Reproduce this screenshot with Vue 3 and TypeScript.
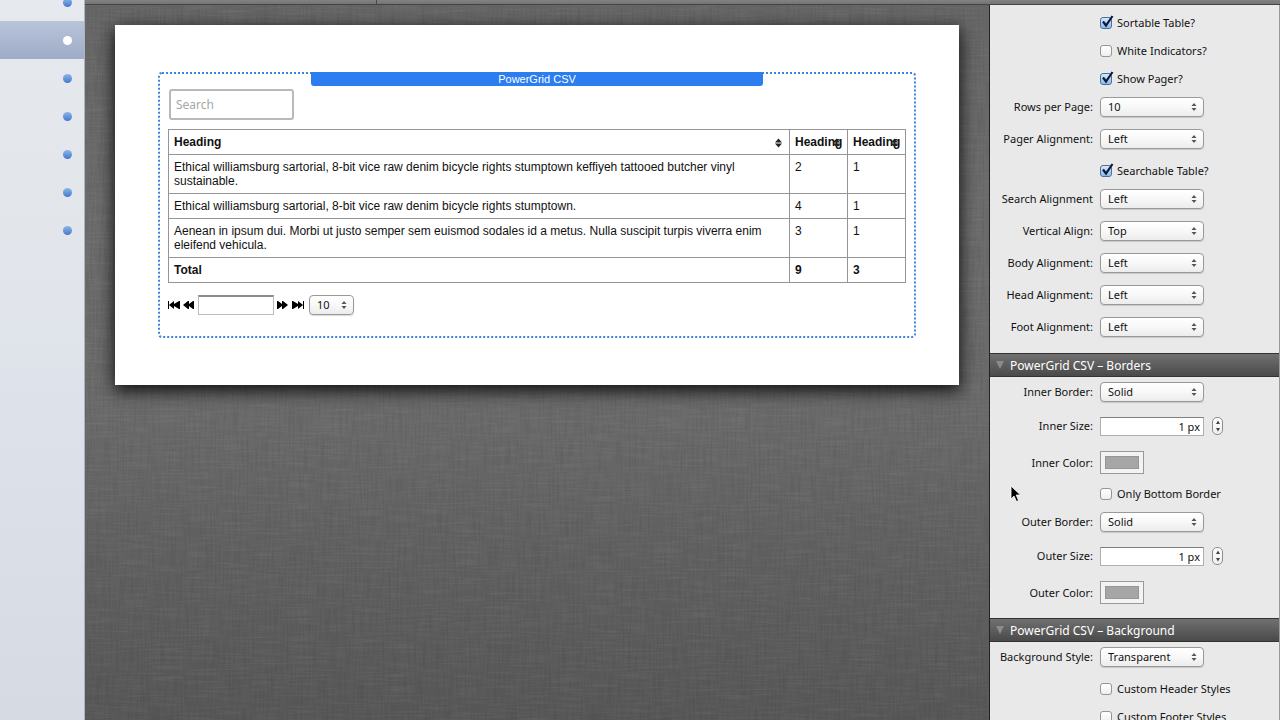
<script setup lang="ts">
import { ref } from 'vue'

interface CheckField { kind: 'check'; id: string; label: string; checked: boolean }
interface SelectField { kind: 'select'; id: string; label: string; value: string; options: string[] }
interface SizeField { kind: 'size'; id: string; label: string; value: string }
interface ColorField { kind: 'color'; id: string; label: string; value: string }
type Field = CheckField | SelectField | SizeField | ColorField
interface Group { id: string; title: string; fields: Field[] }

const align = ['Left', 'Center', 'Right']
const borders = ['None', 'Solid', 'Dashed', 'Dotted']

const groups = ref<Group[]>([
  {
    id: 'general',
    title: '',
    fields: [
      { kind: 'check', id: 'sortable', label: 'Sortable Table?', checked: true },
      { kind: 'check', id: 'white', label: 'White Indicators?', checked: false },
      { kind: 'check', id: 'pager', label: 'Show Pager?', checked: true },
      { kind: 'select', id: 'rows', label: 'Rows per Page:', value: '10', options: ['10', '20', '50'] },
      { kind: 'select', id: 'pager-align', label: 'Pager Alignment:', value: 'Left', options: align },
      { kind: 'check', id: 'searchable', label: 'Searchable Table?', checked: true },
      { kind: 'select', id: 'search-align', label: 'Search Alignment', value: 'Left', options: align },
      { kind: 'select', id: 'vertical', label: 'Vertical Align:', value: 'Top', options: ['Top', 'Middle', 'Bottom'] },
      { kind: 'select', id: 'body-align', label: 'Body Alignment:', value: 'Left', options: align },
      { kind: 'select', id: 'head-align', label: 'Head Alignment:', value: 'Left', options: align },
      { kind: 'select', id: 'foot-align', label: 'Foot Alignment:', value: 'Left', options: align }
    ]
  },
  {
    id: 'borders',
    title: 'PowerGrid CSV – Borders',
    fields: [
      { kind: 'select', id: 'inner-border', label: 'Inner Border:', value: 'Solid', options: borders },
      { kind: 'size', id: 'inner-size', label: 'Inner Size:', value: '1 px' },
      { kind: 'color', id: 'inner-color', label: 'Inner Color:', value: '#a6a6a6' },
      { kind: 'check', id: 'only-bottom', label: 'Only Bottom Border', checked: false },
      { kind: 'select', id: 'outer-border', label: 'Outer Border:', value: 'Solid', options: borders },
      { kind: 'size', id: 'outer-size', label: 'Outer Size:', value: '1 px' },
      { kind: 'color', id: 'outer-color', label: 'Outer Color:', value: '#a6a6a6' }
    ]
  },
  {
    id: 'background',
    title: 'PowerGrid CSV – Background',
    fields: [
      { kind: 'select', id: 'bg-style', label: 'Background Style:', value: 'Transparent', options: ['Transparent', 'Color'] },
      { kind: 'check', id: 'header-styles', label: 'Custom Header Styles', checked: false },
      { kind: 'check', id: 'footer-styles', label: 'Custom Footer Styles', checked: false }
    ]
  }
])

const pages = ref([0, 1, 2, 3, 4, 5, 6])
const activePage = ref(1)
const search = ref('')
const pageNumber = ref('')
const pageSize = ref('10')

const headings = ['Heading', 'Heading', 'Heading']
const rows: string[][] = [
  ['Ethical williamsburg sartorial, 8-bit vice raw denim bicycle rights stumptown keffiyeh tattooed butcher vinyl sustainable.', '2', '1'],
  ['Ethical williamsburg sartorial, 8-bit vice raw denim bicycle rights stumptown.', '4', '1'],
  ['Aenean in ipsum dui. Morbi ut justo semper sem euismod sodales id a metus. Nulla suscipit turpis viverra enim eleifend vehicula.', '3', '1']
]
const totals = ['Total', '9', '3']
</script>

<template>
  <div class="app">
    <nav class="sidebar" aria-label="Pages">
      <button
        v-for="p in pages"
        :key="p"
        type="button"
        class="page-row"
        :class="{ active: p === activePage }"
        :aria-label="`Page ${p + 1}`"
        @click="activePage = p"
      >
        <span class="dot"></span>
      </button>
    </nav>

    <div class="workspace">
      <div class="topbar"><span class="tab-edge"></span></div>
      <div class="body">
        <main class="canvas">
          <svg class="linen" width="100%" height="100%" aria-hidden="true">
            <filter id="weft" x="0" y="0" width="100%" height="100%">
              <feTurbulence type="fractalNoise" baseFrequency="0.03 0.5" numOctaves="2" seed="4" />
              <feColorMatrix values="0 0 0 0 1  0 0 0 0 1  0 0 0 0 1  1.2 0 0 0 -0.5" />
            </filter>
            <filter id="warp" x="0" y="0" width="100%" height="100%">
              <feTurbulence type="fractalNoise" baseFrequency="0.5 0.03" numOctaves="2" seed="9" />
              <feColorMatrix values="0 0 0 0 0  0 0 0 0 0  0 0 0 0 0  1.2 0 0 0 -0.5" />
            </filter>
            <rect width="100%" height="100%" filter="url(#weft)" opacity="0.1" />
            <rect width="100%" height="100%" filter="url(#warp)" opacity="0.13" />
          </svg>

          <div class="sheet">
            <section class="widget">
              <div class="widget-name">PowerGrid CSV</div>
              <input v-model="search" class="search" type="text" placeholder="Search" aria-label="Search" />
              <table>
                <colgroup>
                  <col />
                  <col class="narrow" />
                  <col class="narrow" />
                </colgroup>
                <thead>
                  <tr>
                    <th v-for="(h, i) in headings" :key="i" scope="col">
                      <button type="button" class="sort">
                        {{ h }}
                        <svg class="sort-icon" viewBox="0 0 7 10" width="7" height="10" aria-hidden="true">
                          <path d="M3.500 0.500 7 4.400H0zM0 5.600h7L3.500 9.500z" fill="#222" />
                        </svg>
                      </button>
                    </th>
                  </tr>
                </thead>
                <tbody>
                  <tr v-for="(r, i) in rows" :key="i">
                    <td v-for="(c, j) in r" :key="j">{{ c }}</td>
                  </tr>
                </tbody>
                <tfoot>
                  <tr>
                    <td v-for="(t, i) in totals" :key="i">{{ t }}</td>
                  </tr>
                </tfoot>
              </table>
              <div class="pager">
                <button type="button" aria-label="First page">
                  <svg viewBox="0 0 12 8" width="12" height="8"><path d="M0 0h1v8H0zM1 4l5-4v3l5-3h1v8h-1L6 5v3z" /></svg>
                </button>
                <button type="button" aria-label="Previous page">
                  <svg viewBox="0 0 12 8" width="12" height="8"><path d="M0 4l5-4h1v3l4-3h1v8h-1L6 5v3H5z" /></svg>
                </button>
                <input v-model="pageNumber" type="text" aria-label="Page number" />
                <button type="button" aria-label="Next page">
                  <svg viewBox="0 0 12 8" width="12" height="8"><path d="M11 4L6 0H5v3L1 0H0v8h1l4-3v3h1z" /></svg>
                </button>
                <button type="button" aria-label="Last page">
                  <svg viewBox="0 0 12 8" width="12" height="8"><path d="M12 0h-1v8h1zM11 4L6 0v3L1 0H0v8h1l5-3v3z" /></svg>
                </button>
                <span class="popup small">
                  <select v-model="pageSize" aria-label="Rows per page">
                    <option>10</option>
                    <option>20</option>
                  </select>
                  <svg viewBox="0 0 6 8" width="6" height="8" aria-hidden="true"><path d="M3 0 5.5 3h-5zM.5 5h5L3 8z" /></svg>
                </span>
              </div>
            </section>
          </div>
        </main>

        <aside class="inspector">
          <section v-for="g in groups" :key="g.id" class="group" :class="{ untitled: !g.title }">
            <h2 v-if="g.title">
              <svg viewBox="0 0 8 8" width="8" height="8" aria-hidden="true"><path d="M0 0h8L4 8z" fill="#8b8b8b" /></svg>
              {{ g.title }}
            </h2>
            <div class="fields">
              <div v-for="f in g.fields" :key="f.id" class="row" :class="f.kind">
                <template v-if="f.kind === 'check'">
                  <span class="box">
                    <input :id="f.id" v-model="f.checked" type="checkbox" />
                    <svg v-if="f.checked" viewBox="0 0 14 14" width="14" height="14" aria-hidden="true">
                      <path d="M3 6.5 6 10.5 12.5 1" fill="none" stroke="#0b1c3c" stroke-width="2.2" />
                    </svg>
                  </span>
                  <label :for="f.id">{{ f.label }}</label>
                </template>
                <template v-else>
                  <label class="name" :for="f.id">{{ f.label }}</label>
                  <span v-if="f.kind === 'select'" class="popup">
                    <select :id="f.id" v-model="f.value">
                      <option v-for="o in f.options" :key="o">{{ o }}</option>
                    </select>
                    <svg viewBox="0 0 6 8" width="6" height="8" aria-hidden="true"><path d="M3 0 5.5 3h-5zM.5 5h5L3 8z" /></svg>
                  </span>
                  <template v-else-if="f.kind === 'size'">
                    <input :id="f.id" v-model="f.value" class="size-input" type="text" />
                    <button type="button" class="stepper" :aria-label="`Change ${f.label}`">
                      <svg viewBox="0 0 6 12" width="6" height="12" aria-hidden="true"><path d="M3 0.500 5 4H1zM1 8h4L3 11.500z" /></svg>
                    </button>
                  </template>
                  <input v-else :id="f.id" v-model="f.value" class="swatch" type="color" />
                </template>
              </div>
            </div>
          </section>
        </aside>
      </div>
    </div>

    <svg class="cursor" viewBox="0 0 12 18" width="12" height="18" aria-hidden="true">
      <path d="M1 1v13l3-3 2.500 5.500 2-1L6.200 10H10.500z" fill="#000" stroke="#fff" stroke-width="0.800" />
    </svg>
  </div>
</template>

<style>
body {
  background: #5c5c5c;
}
</style>

<style scoped>
* {
  box-sizing: border-box;
}

.app {
  position: relative;
  display: flex;
  height: 100vh;
  overflow: hidden;
  font-family: 'Noto Sans', 'Open Sans', sans-serif;
  font-size: 11px;
  color: #111;
}

button,
input,
select {
  margin: 0;
  padding: 0;
  font: inherit;
  color: inherit;
}

/* The page list is scrolled part-way through its first row. */
.sidebar {
  flex: none;
  width: 85px;
  margin-top: -17px;
  background: linear-gradient(#e6e9ed, #e1e5eb 45%, #dce1ea 60%, #d5dae3);
  border-right: 1px solid #aeb4bb;
}

.page-row {
  display: flex;
  align-items: center;
  justify-content: flex-end;
  width: 100%;
  height: 38px;
  padding-right: 12px;
  background: none;
  border: 0;
}

.page-row.active {
  background: linear-gradient(#b9c4da, #9eacc8);
}

.dot {
  width: 9px;
  height: 9px;
  border-radius: 50%;
  background: linear-gradient(#8db6e8, #4479ca);
}

.active .dot {
  background: #fff;
}

.workspace {
  display: flex;
  flex: 1;
  flex-direction: column;
  min-width: 0;
}

.topbar {
  display: flex;
  flex: none;
  height: 5px;
  background: linear-gradient(#828282, #747474);
  border-bottom: 1px solid #444;
}

.tab-edge {
  width: 292px;
  border-right: 1px solid #484848;
}

.body {
  display: flex;
  flex: 1;
  min-height: 0;
}

.canvas {
  position: relative;
  flex: 1;
  min-width: 0;
  padding: 20px 30px;
  background: linear-gradient(#666, #6c6c6c 30%, #6a6a6a 57%, #616161 75%, #575757);
}

.linen {
  position: absolute;
  inset: 0;
}

.sheet {
  position: relative;
  padding: 47px 43px;
  background: #fff;
  box-shadow: 0 5px 16px 1px rgba(0, 0, 0, 0.85);
}

.widget {
  position: relative;
  padding: 15px 8px 21px;
  border: 2px dotted #3f85dc;
  border-radius: 4px;
  font-family: 'Liberation Sans', Arial, sans-serif;
  font-size: 12px;
  line-height: 14px;
}

.widget-name {
  position: absolute;
  top: -2px;
  left: 20%;
  width: 60%;
  height: 14px;
  border-radius: 0 0 3px 3px;
  background: #2b7df0;
  color: #fff;
  font-size: 11px;
  text-align: center;
}

.search {
  display: block;
  width: 125px;
  height: 31px;
  margin: 0 0 9px 1px;
  padding: 0 5px;
  background: #fff;
  border: 2px solid #b9b9b9;
  border-radius: 3px;
  font-family: 'Noto Sans', 'Open Sans', sans-serif;
  font-size: 12px;
}

.search::placeholder {
  color: #a8a8a8;
}

table {
  width: 100%;
  table-layout: fixed;
  border-collapse: collapse;
}

.narrow {
  width: 58px;
}

th,
td {
  padding: 5px;
  border: 1px solid #959595;
  text-align: left;
  vertical-align: top;
}

th {
  position: relative;
}

tfoot td {
  font-weight: bold;
}

.sort {
  display: block;
  background: none;
  border: 0;
  font-weight: bold;
  line-height: 14px;
}

.sort-icon {
  position: absolute;
  top: 8px;
  right: 7px;
}

.pager {
  display: flex;
  align-items: center;
  gap: 3px;
  margin-top: 12px;
}

.pager button {
  display: flex;
  background: none;
  border: 0;
}

.pager input {
  width: 76px;
  height: 20px;
  background: #fff;
  border: 1px solid #bbb;
  border-top: 2px solid #8c8c8c;
}

.popup {
  position: relative;
  display: flex;
  width: 104px;
}

.popup select {
  width: 100%;
  height: 20px;
  padding: 0 20px 0 7px;
  appearance: none;
  background: linear-gradient(#fff, #f8f8f8 50%, #ececec);
  border: 1px solid #999;
  border-radius: 4px;
  box-shadow: 0 1px 1px rgba(0, 0, 0, 0.15);
  line-height: 18px;
}

.popup svg {
  position: absolute;
  top: 6px;
  right: 7px;
  fill: #555;
  pointer-events: none;
}

.popup.small {
  width: 45px;
  margin-left: 2px;
  font-family: 'Noto Sans', 'Open Sans', sans-serif;
  font-size: 11px;
}

.inspector {
  flex: none;
  width: 291px;
  overflow: hidden;
  background: #e9e9e9;
  border-right: 1px solid #999;
  border-left: 1px solid #222;
}

.untitled .fields {
  padding-top: 2px;
}

.fields {
  padding-bottom: 10px;
}

h2 {
  display: flex;
  align-items: center;
  gap: 6px;
  height: 24px;
  margin: 0 0 -1px;
  padding-left: 6px;
  background: linear-gradient(#707070, #4a4a4a);
  border-top: 1px solid #333;
  border-bottom: 1px solid #333;
  color: #fff;
  font-size: 12px;
  font-weight: normal;
}

.row {
  display: flex;
  align-items: center;
  height: 32px;
}

.row.check {
  align-items: flex-start;
  height: 28px;
  padding: 8px 0 4px 110px;
  line-height: 16px;
}

.row.size {
  height: 36px;
}

.row.color {
  height: 34px;
  padding-top: 2px;
}

.name {
  flex: none;
  width: 103px;
  margin-right: 7px;
  padding-bottom: 2px;
  text-align: right;
  white-space: nowrap;
}

.color .name {
  padding-bottom: 0;
}

.box {
  position: relative;
  display: flex;
  width: 12px;
  height: 12px;
  margin: 2px 5px 2px 0;
}

.box input {
  width: 12px;
  height: 12px;
  appearance: none;
  background: linear-gradient(#fff, #efefef);
  border: 1px solid #959595;
  border-radius: 3px;
}

.box input:checked {
  background: linear-gradient(#d8e9fa, #8dbdec);
  border-color: #4c6f9f;
}

.box svg {
  position: absolute;
  top: -2px;
  left: 0;
  pointer-events: none;
}

.size-input {
  width: 104px;
  height: 19px;
  padding-right: 3px;
  background: #fff;
  border: 1px solid #b0b0b0;
  border-top-color: #808080;
  text-align: right;
}

.stepper {
  display: flex;
  align-items: center;
  justify-content: center;
  width: 11px;
  height: 18px;
  margin-left: 8px;
  background: linear-gradient(#fff, #eee);
  border: 1px solid #8d8d8d;
  border-radius: 5px;
}

.stepper svg {
  flex: none;
  fill: #444;
}

.swatch {
  width: 44px;
  height: 23px;
  padding: 4px;
  appearance: none;
  background: #f3f3f3;
  border: 1px solid #999;
}

.swatch::-webkit-color-swatch-wrapper {
  padding: 0;
}

.swatch::-webkit-color-swatch {
  border: 1px solid #969696;
}

.cursor {
  position: absolute;
  top: 485px;
  left: 1010px;
  pointer-events: none;
}
</style>
